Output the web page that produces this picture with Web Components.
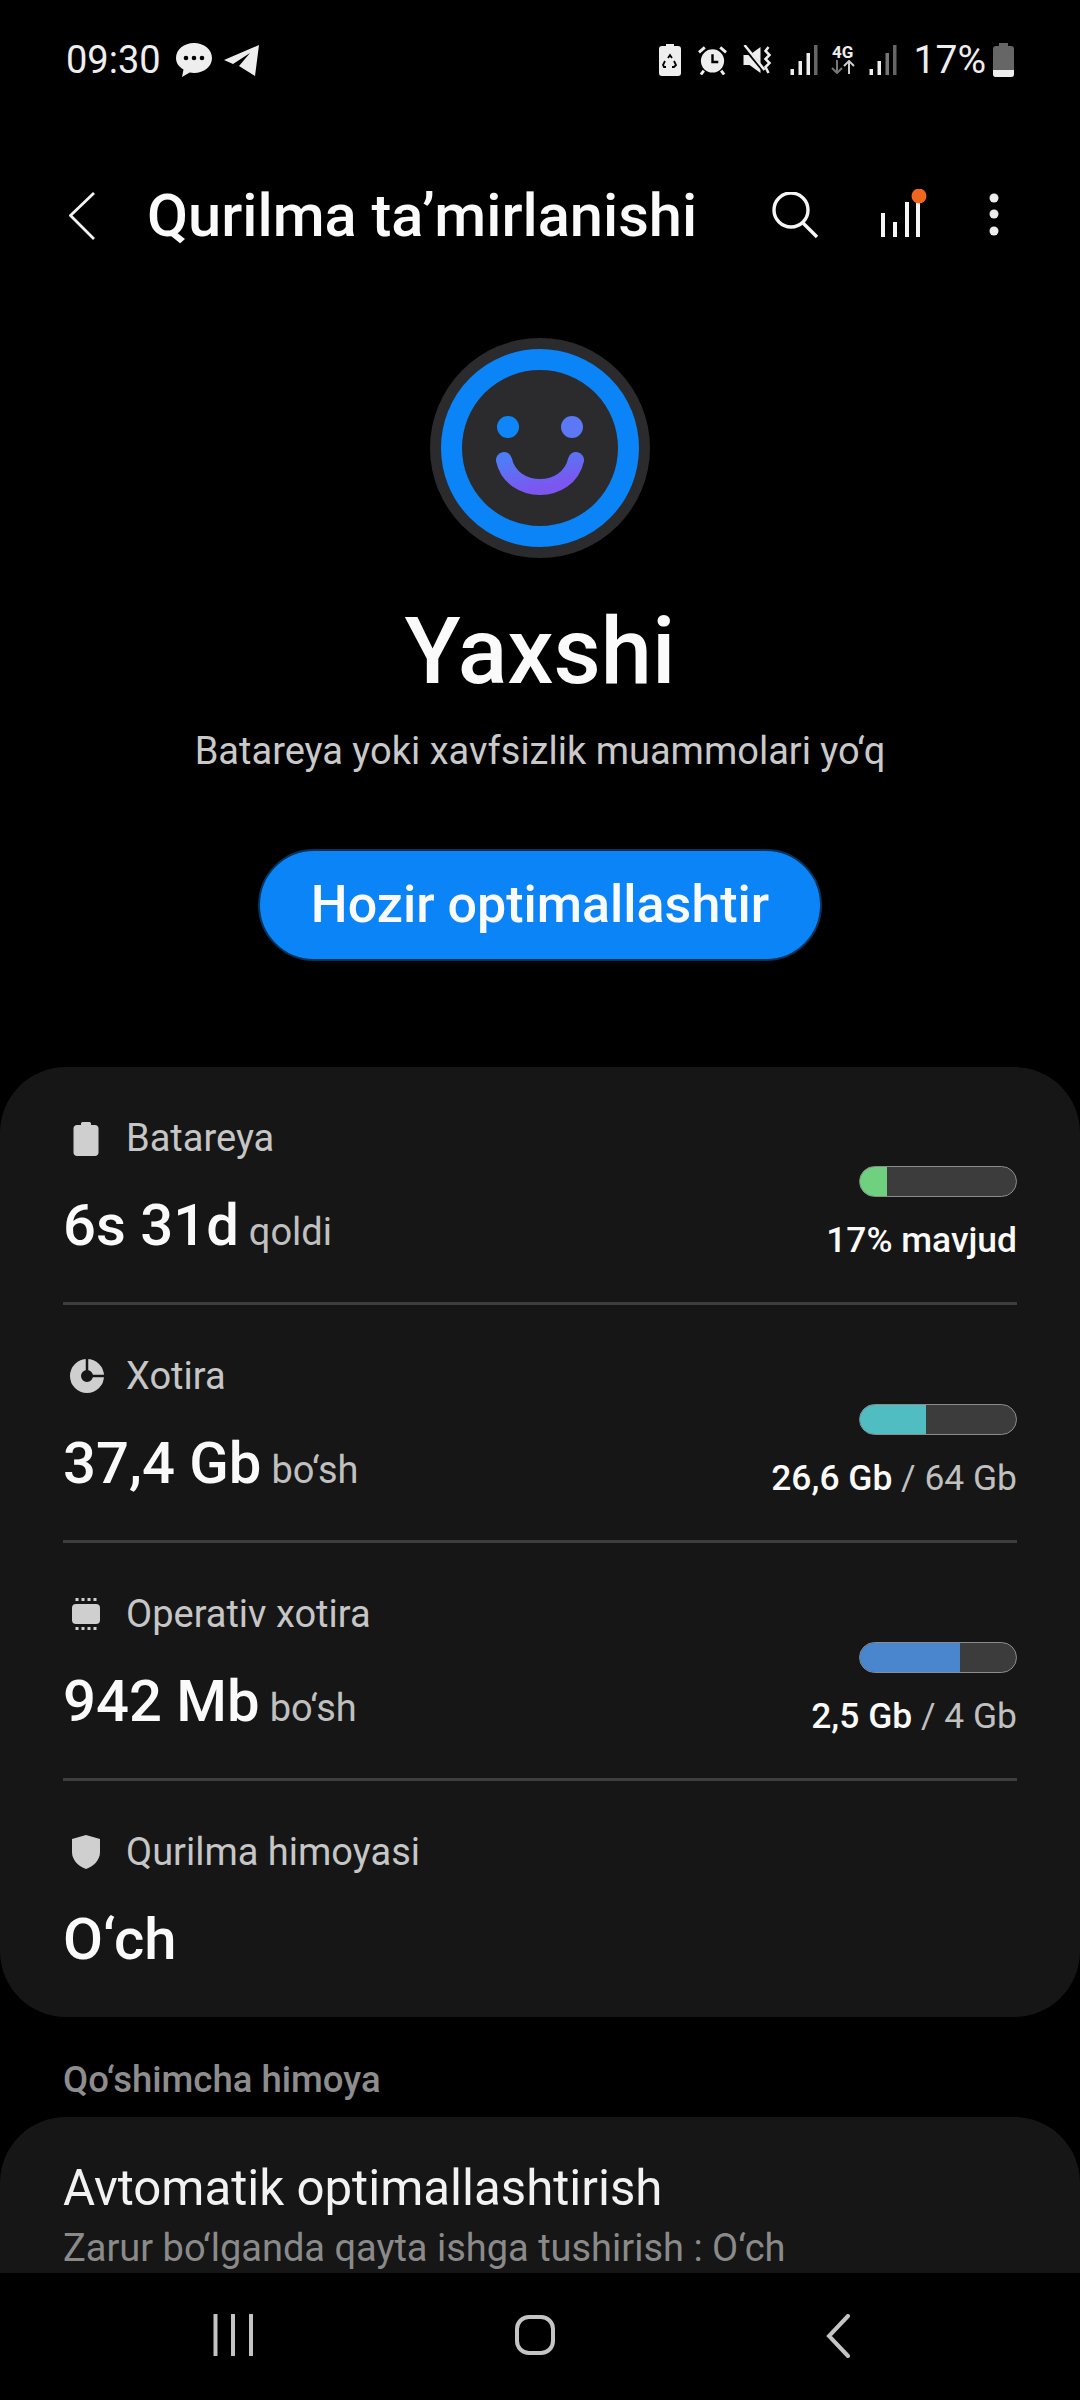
<!DOCTYPE html>
<html lang="uz">
<head>
<meta charset="utf-8">
<title>Qurilma ta’mirlanishi</title>
<style>
  html, body { margin: 0; padding: 0; background: #000; }
  body { width: 1080px; height: 2400px; overflow: hidden; display: flex; flex-direction: column; font-family: Roboto, "Liberation Sans", sans-serif; color: #fff; }
  main-scroll { flex: 1; min-height: 0; }
  svg { display: block; }
  b { font-weight: 500; color: #fafafa; }
</style>
</head>
<body>
<status-bar></status-bar>
<app-bar heading="Qurilma ta’mirlanishi"></app-bar>
<main-scroll>
  <health-summary heading="Yaxshi" note="Batareya yoki xavfsizlik muammolari yo‘q" action="Hozir optimallashtir"></health-summary>
  <info-card>
    <stat-row label="Batareya" value="6s 31d" unit="qoldi" percent="17" color="#6fd080" divider>
      <svg slot="icon" style="margin-left:2px" width="26" height="36" viewBox="0 0 26 36"><path fill="#cfcfcf" d="M8 3.500c0-1 1-1.500 2-1.500h6c1 0 2 .5 2 1.500V5h4c2 0 3.500 1.500 3.500 3.500v24c0 2-1.500 3.500-3.500 3.500H4c-2 0-3.500-1.500-3.500-3.500v-24C.5 6.500 2 5 4 5h4z"/></svg>
      <span slot="usage"><b>17% mavjud</b></span>
    </stat-row>
    <stat-row label="Xotira" value="37,4 Gb" unit="bo‘sh" percent="42" color="#50bdc2" divider>
      <svg slot="icon" style="margin-left:-2px" width="36" height="36" viewBox="0 0 36 36"><circle cx="18" cy="18" r="11.500" fill="none" stroke="#cfcfcf" stroke-width="11"/><path d="M18 0v18h18" fill="none" stroke="#161616" stroke-width="2.500"/></svg>
      <span slot="usage"><b>26,6 Gb</b> / 64 Gb</span>
    </stat-row>
    <stat-row label="Operativ xotira" value="942 Mb" unit="bo‘sh" percent="64" color="#4a86cd" divider>
      <svg slot="icon" width="30" height="32" viewBox="0 0 30 32"><rect x="1" y="6" width="28" height="20" rx="4" fill="#cfcfcf"/><path d="M5 0v3M11 0v3M17 0v3M23 0v3M5 29v3M11 29v3M17 29v3M23 29v3" stroke="#cfcfcf" stroke-width="3" transform="translate(1 0)"/></svg>
      <span slot="usage"><b>2,5 Gb</b> / 4 Gb</span>
    </stat-row>
    <stat-row label="Qurilma himoyasi" value="O‘ch">
      <svg slot="icon" width="30" height="36" viewBox="0 0 30 36"><path fill="#cfcfcf" d="M15 1l14 4v13c0 8-6 14-14 17C7 32 1 26 1 18V5z"/></svg>
    </stat-row>
  </info-card>
  <section-label>Qo‘shimcha himoya</section-label>
  <setting-card heading="Avtomatik optimallashtirish" note="Zarur bo‘lganda qayta ishga tushirish : O‘ch"></setting-card>
</main-scroll>
<nav-bar></nav-bar>

<script>
class StatusBar extends HTMLElement {
  constructor() {
    super();
    this.attachShadow({ mode: 'open' });
    this.shadowRoot.innerHTML = `
      <style>
        :host { display: flex; align-items: center; height: 120px; padding: 0 66px 0 66px; font-size: 38px; color: #eee; flex: none; }
        .left, .right { display: flex; align-items: center; }
        .right { margin-left: auto; }
        .time { width: 110px; }
        .net { font-size: 17px; font-weight: 700; line-height: 15px; text-align: center; width: 24px; margin: 0 14px 0 13px; }
        .pct { font-size: 39px; margin: 0 7px 0 17px; }
      </style>
      <div class="left">
        <span class="time">09:30</span>
        <svg width="36" height="36" viewBox="0 0 36 36"><path fill="#eee" d="M18 1c10 0 18 6.500 18 15s-8 15-18 15c-1.500 0-3-.2-4.300-.5L6 35l1.500-7.500C3 25 0 21 0 16 0 7.500 8 1 18 1z"/><circle cx="10" cy="16" r="2.300"/><circle cx="18" cy="16" r="2.300"/><circle cx="26" cy="16" r="2.300"/></svg>
        <svg style="margin-left:12px" width="35" height="31" viewBox="0 0 35 31"><path fill="#eee" d="M0 15L35 0l-4 31-16-10 11-13-17 11z"/></svg>
      </div>
      <div class="right">
        <svg width="22" height="32" viewBox="0 0 22 32"><path fill="#eee" d="M7 0h8v2h4c2 0 3 1 3 3v24c0 2-1 3-3 3H3c-2 0-3-1-3-3V5c0-2 1-3 3-3h4z"/><path d="M9 14l2-3 2 3M15 17l2 4-2 2h-2M7 23H5l-1-2 2-4" fill="none" stroke="#000" stroke-width="1.800"/></svg>
        <svg style="margin-left:17px" width="29" height="30" viewBox="0 0 30 30"><circle cx="15" cy="16" r="12" fill="#eee"/><path d="M15 9v8h6" fill="none" stroke="#000" stroke-width="2.500"/><path d="M1 7l6-5M29 7l-6-5M6 26l-3 4M24 26l3 4" stroke="#eee" stroke-width="3"/></svg>
        <svg style="margin-left:16px" width="29" height="30" viewBox="0 0 28 30"><path fill="#eee" d="M0 10h6l11-8v26L6 20H0z"/><path d="M0 1l20 24" stroke="#000" stroke-width="4"/><path d="M1 0l20 25" stroke="#eee" stroke-width="2.500"/><path d="M25 2l-3 4 4 4-4 4 4 4-4 4 3 6" fill="none" stroke="#eee" stroke-width="2.500"/></svg>
        <svg style="margin-left:18px" width="28" height="30" viewBox="0 0 27 30"><rect y="24" width="3.500" height="6" fill="#eee"/><rect x="8" y="16" width="3.500" height="14" fill="#eee"/><rect x="16" y="8" width="3.500" height="22" fill="#eee"/><rect x="23.500" width="3.500" height="30" fill="#666"/></svg>
        <div class="net">4G<svg width="24" height="14" viewBox="0 0 24 14"><path d="M6 0v13M1 8l5 5 5-5" fill="none" stroke="#777" stroke-width="2"/><path d="M18 14V1M13 6l5-5 5 5" fill="none" stroke="#ccc" stroke-width="2"/></svg></div>
        <svg width="28" height="30" viewBox="0 0 27 30"><rect y="24" width="3.500" height="6" fill="#eee"/><rect x="8" y="16" width="3.500" height="14" fill="#eee"/><rect x="16" y="8" width="3.500" height="22" fill="#777"/><rect x="23.500" width="3.500" height="30" fill="#666"/></svg>
        <span class="pct">17%</span>
        <svg width="21" height="34" viewBox="0 0 21 34"><path fill="#666" d="M6 0h9v3h3c2 0 3 1 3 3v25c0 2-1 3-3 3H3c-2 0-3-1-3-3V6c0-2 1-3 3-3h3z"/><path fill="#eee" d="M0 27h21v4c0 2-1 3-3 3H3c-2 0-3-1-3-3z"/></svg>
      </div>
    `;
  }
}

class AppBar extends HTMLElement {
  constructor() {
    super();
    this.attachShadow({ mode: 'open' });
    this.shadowRoot.innerHTML = `
      <style>
        :host { display: flex; align-items: center; height: 192px; padding: 0 0 0 69px; box-sizing: border-box; flex: none; }
        h1 { margin: 0 0 0 52px; font-size: 59.600px; font-weight: 500; line-height: 68px; color: #fafafa; flex: 1; }
        .actions { display: flex; align-items: center; }
      </style>
      <svg width="26" height="48" viewBox="0 0 26 48"><path d="M25 1L1.500 23.500 25 47" fill="none" stroke="#f2f2f2" stroke-width="2.800"/></svg>
      <h1>${this.getAttribute('heading')}</h1>
      <div class="actions">
        <svg width="46" height="48" viewBox="0 0 46 48"><circle cx="19" cy="18" r="17" fill="none" stroke="#f6f6f6" stroke-width="3.400"/><path d="M31 31l14 14" stroke="#f6f6f6" stroke-width="3.400"/></svg>
        <svg style="margin-left:63px" width="46" height="54" viewBox="0 0 46 54"><path d="M2 24v24M14 33v15M26 13v35M37 13v35" stroke="#f6f6f6" stroke-width="4"/><circle cx="38" cy="7" r="7.500" fill="#f0661f"/></svg>
        <svg style="margin:0 80px 0 61px" width="12" height="46" viewBox="0 0 12 46"><circle cx="6" cy="5" r="4.500" fill="#eee"/><circle cx="6" cy="21" r="4.500" fill="#eee"/><circle cx="6" cy="38" r="4.500" fill="#eee"/></svg>
      </div>
    `;
  }
}

class HealthSummary extends HTMLElement {
  constructor() {
    super();
    this.attachShadow({ mode: 'open' });
    this.shadowRoot.innerHTML = `
      <style>
        :host { display: flex; flex-direction: column; align-items: center; padding-top: 26px; height: 755px; box-sizing: border-box; }
        h2 { margin: 42px 0 0; font-size: 92px; line-height: 104px; font-weight: 500; color: #fafafa; }
        p { margin: 23px 0 0; font-size: 38px; line-height: 48px; color: #c9c9c9; }
        button { all: unset; margin-top: 74px; width: 564px; height: 112px; box-sizing: border-box; border-radius: 56px; background: #0a84f7; border: 2px solid #06335c; color: #fafafa; font: 500 52px/108px Roboto, sans-serif; text-align: center; }
      </style>
      <svg width="220" height="220" viewBox="0 0 220 220">
        <defs><linearGradient id="face" x1="0" y1="0" x2="0.600" y2="1"><stop offset="0" stop-color="#4f7cf6"/><stop offset="1" stop-color="#7d56f0"/></linearGradient></defs>
        <circle cx="110" cy="110" r="110" fill="#2b2b2d"/>
        <circle cx="110" cy="110" r="88.500" fill="none" stroke="#0a84f7" stroke-width="21"/>
        <circle cx="78" cy="89" r="11" fill="#0f86f8"/>
        <circle cx="142" cy="89" r="11" fill="#5c78f5"/>
        <path d="M74 122c8 36 64 36 72 0" fill="none" stroke="url(#face)" stroke-width="16" stroke-linecap="round"/>
      </svg>
      <h2>${this.getAttribute('heading')}</h2>
      <p>${this.getAttribute('note')}</p>
      <button>${this.getAttribute('action')}</button>
    `;
  }
}

class InfoCard extends HTMLElement {
  constructor() {
    super();
    this.attachShadow({ mode: 'open' });
    this.shadowRoot.innerHTML = `
      <style>
        :host { display: block; background: #161616; border-radius: 66px; padding: 0 63px; height: 950px; box-sizing: border-box; }
      </style>
      <slot></slot>
    `;
  }
}

class StatRow extends HTMLElement {
  constructor() {
    super();
    this.attachShadow({ mode: 'open' });
    const percent = this.getAttribute('percent');
    this.shadowRoot.innerHTML = `
      <style>
        :host { display: flex; justify-content: space-between; height: 238px; box-sizing: border-box; padding-top: 47px; }
        :host([divider]) { border-bottom: 3px solid #3e3e3e; }
        .label { display: flex; align-items: center; height: 48px; font-size: 38px; color: #c6c6c6; }
        .icon { width: 63px; padding-left: 8px; box-sizing: border-box; flex: none; }
        .value { margin-top: 25px; display: flex; align-items: baseline; font-size: 58px; line-height: 76px; font-weight: 500; color: #fafafa; }
        .unit { margin-left: 10px; font-size: 38px; font-weight: 400; color: #c0c0c0; }
        .right { display: flex; flex-direction: column; align-items: flex-end; padding-top: 52px; }
        .bar { width: 158px; height: 31px; box-sizing: border-box; border-radius: 16px; background: #3c3c3c; border: 1.500px solid #8c8c8c; overflow: hidden; display: flex; }
        .fill { height: 100%; }
        .usage { margin-top: 19px; font-size: 35.400px; line-height: 48px; color: #c0c0c0; }
      </style>
      <div>
        <div class="label"><span class="icon"><slot name="icon"></slot></span>${this.getAttribute('label')}</div>
        <div class="value">${this.getAttribute('value')}${this.hasAttribute('unit') ? `<span class="unit">${this.getAttribute('unit')}</span>` : ''}</div>
      </div>
      ${percent ? `<div class="right">
        <div class="bar"><div class="fill" style="width:${percent}%;background:${this.getAttribute('color')}"></div></div>
        <div class="usage"><slot name="usage"></slot></div>
      </div>` : ''}
    `;
  }
}

class SectionLabel extends HTMLElement {
  constructor() {
    super();
    this.attachShadow({ mode: 'open' });
    this.shadowRoot.innerHTML = `
      <style>
        :host { display: block; height: 100px; box-sizing: border-box; padding: 39px 63px 0; font-size: 36.500px; line-height: 48px; font-weight: 500; color: #8d8d8d; }
      </style>
      <slot></slot>
    `;
  }
}

class SettingCard extends HTMLElement {
  constructor() {
    super();
    this.attachShadow({ mode: 'open' });
    this.shadowRoot.innerHTML = `
      <style>
        :host { display: block; background: #161616; border-radius: 66px 66px 0 0; height: 158px; box-sizing: border-box; padding: 39px 63px 0; overflow: hidden; }
        .t { font-size: 49.200px; line-height: 64px; color: #f2f2f2; }
        .s { font-size: 38px; line-height: 48px; margin-top: 4px; color: #8a8a8a; }
      </style>
      <div class="t">${this.getAttribute('heading')}</div>
      <div class="s">${this.getAttribute('note')}</div>
    `;
  }
}

class NavBar extends HTMLElement {
  constructor() {
    super();
    this.attachShadow({ mode: 'open' });
    this.shadowRoot.innerHTML = `
      <style>
        :host { display: flex; justify-content: space-between; align-items: flex-start; height: 127px; box-sizing: border-box; padding: 41px 230px 0 213px; background: #000; flex: none; }
        .home { margin-left: -10px; }
      </style>
      <svg width="40" height="42" viewBox="0 0 40 42"><path d="M2.500 1v40M20 1v40M38 1v40" stroke="#c4c4c4" stroke-width="4" stroke-linecap="round"/></svg>
      <svg class="home" width="42" height="42" viewBox="0 0 42 42"><rect x="3" y="3" width="36" height="36" rx="12" fill="none" stroke="#c4c4c4" stroke-width="4"/></svg>
      <svg width="24" height="44" viewBox="0 0 24 44"><path d="M22 2L3 22l19 20" fill="none" stroke="#c4c4c4" stroke-width="4" stroke-linecap="round"/></svg>
    `;
  }
}

class MainScroll extends HTMLElement {
  constructor() {
    super();
    this.attachShadow({ mode: 'open' });
    this.shadowRoot.innerHTML = `
      <style>:host { display: block; overflow: hidden; }</style>
      <slot></slot>
    `;
  }
}

customElements.define('status-bar', StatusBar);
customElements.define('app-bar', AppBar);
customElements.define('health-summary', HealthSummary);
customElements.define('info-card', InfoCard);
customElements.define('stat-row', StatRow);
customElements.define('section-label', SectionLabel);
customElements.define('setting-card', SettingCard);
customElements.define('nav-bar', NavBar);
customElements.define('main-scroll', MainScroll);
</script>
</body>
</html>
